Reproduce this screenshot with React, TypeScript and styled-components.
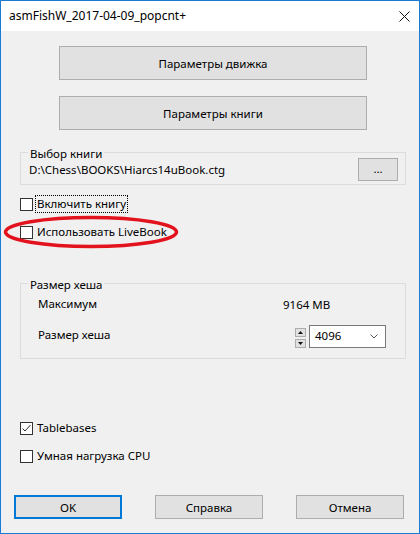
import { styled, createGlobalStyle } from 'styled-components'

const Global = createGlobalStyle`
html, body { margin: 0; padding: 0; background: #f0f0f0; }
* { box-sizing: border-box; }
`

const FONT = `"Noto Sans", "Liberation Sans", sans-serif`

const Check = ({ checked, focused, label }: { checked?: boolean; focused?: boolean; label: string }) => (
    <CheckRow>
        <Box>
            {checked && (
                <svg width="11" height="11" viewBox="0 0 11 11">
                    <polyline points="1.5,5.5 4,8 9.5,2" fill="none" stroke="#333" strokeWidth="1" />
                </svg>
            )}
        </Box>
        <CheckText $focused={focused}>{label}</CheckText>
    </CheckRow>
)

const App = () => {
    return (
        <>
            <Global />
            <Window>
                <TitleBar>
                    <Title>asmFishW_2017-04-09_popcnt+</Title>
                    <Close>
                        <svg width="11" height="11" viewBox="0 0 11 11">
                            <path d="M0.5 0.5 L10.5 10.5 M10.5 0.5 L0.5 10.5" stroke="#111" strokeWidth="1" />
                        </svg>
                    </Close>
                </TitleBar>
                <Body>
                    <BigButton $top={15}>Параметры движка</BigButton>
                    <BigButton $top={16}>Параметры книги</BigButton>

                    <Group $top={13}>
                        <Legend>Выбор книги</Legend>
                        <PathRow>
                            <span>D:\Chess\BOOKS\Hiarcs14uBook.ctg</span>
                            <SmallButton>...</SmallButton>
                        </PathRow>
                    </Group>

                    <Checks $top={10}>
                        <Check focused label="Включить книгу" />
                        <Marked>
                            <Check label="Использовать LiveBook" />
                            <Ellipse width="178" height="34" viewBox="0 0 178 34">
                                <ellipse cx="88" cy="17" rx="85.5" ry="14.5" fill="none" stroke="#e3131e" strokeWidth="3.5" />
                            </Ellipse>
                        </Marked>
                    </Checks>

                    <Group $top={33}>
                        <Legend>Размер хеша</Legend>
                        <HashRows>
                            <InfoRow>
                                <InfoLabel $w={245}>Максимум</InfoLabel>
                                <span>9164 MB</span>
                            </InfoRow>
                            <InfoRow>
                                <InfoLabel $w={257}>Размер хеша</InfoLabel>
                                <Spinner>
                                    <SpinBtn>
                                        <svg width="5" height="3" viewBox="0 0 5 3"><polygon points="2.5,0 5,3 0,3" fill="#111" /></svg>
                                    </SpinBtn>
                                    <SpinBtn>
                                        <svg width="5" height="3" viewBox="0 0 5 3"><polygon points="0,0 5,0 2.5,3" fill="#111" /></svg>
                                    </SpinBtn>
                                </Spinner>
                                <Combo>
                                    <span>4096</span>
                                    <svg width="8" height="5" viewBox="0 0 8 5">
                                        <polyline points="0.5,0.5 4,4 7.5,0.5" fill="none" stroke="#555" strokeWidth="1" />
                                    </svg>
                                </Combo>
                            </InfoRow>
                        </HashRows>
                    </Group>

                    <Checks $top={60}>
                        <Check checked label="Tablebases" />
                        <Check label="Умная нагрузка CPU" />
                    </Checks>

                    <Footer>
                        <DlgButton $primary>OK</DlgButton>
                        <DlgButton>Справка</DlgButton>
                        <DlgButton>Отмена</DlgButton>
                    </Footer>
                </Body>
            </Window>
        </>
    )
}

export default App

const Window = styled.div`
width: 420px;
height: 534px;
border: 1px solid #1b7bd4;
background: #f0f0f0;
font-family: ${FONT};
font-size: 11.5px;
color: #000;
display: flex;
flex-direction: column;
overflow: hidden;
`

const TitleBar = styled.div`
height: 30px;
background: #fff;
display: flex;
align-items: center;
justify-content: space-between;
padding: 0 9px 0 8px;
`

const Title = styled.div`
font-size: 12px;
line-height: 16px;
`

const Close = styled.div`
width: 11px;
height: 11px;
display: flex;
margin-top: 1px;
`

const Body = styled.div`
flex: 1;
display: flex;
flex-direction: column;
`

const BigButton = styled.div<{ $top: number }>`
margin: ${p => p.$top}px 0 0 58px;
width: 308px;
height: 34px;
background: #e1e1e1;
border: 1px solid #adadad;
display: flex;
align-items: center;
justify-content: center;
`

const Group = styled.fieldset<{ $top: number }>`
margin: ${p => p.$top}px 0 0 19px;
width: 386px;
padding: 0;
border: 1px solid #dcdcdc;
min-width: 0;
`

const Legend = styled.legend`
margin-left: 7px;
padding: 4px 2px 0;
line-height: 14px;
`

const PathRow = styled.div`
margin-top: -3px;
padding: 0 7px 3px 8px;
display: flex;
align-items: center;
justify-content: space-between;
line-height: 16px;

& > span { margin-top: 1px; }
`

const SmallButton = styled.div`
width: 40px;
height: 23px;
background: #e1e1e1;
border: 1px solid #adadad;
display: flex;
align-items: center;
justify-content: center;
padding-bottom: 2px;
`

const Checks = styled.div<{ $top: number }>`
margin: ${p => p.$top}px 0 0 19px;
display: flex;
flex-direction: column;
gap: 10px;
`

const CheckRow = styled.div`
height: 18px;
display: flex;
align-items: center;
gap: 2px;
`

const Box = styled.span`
width: 13px;
height: 13px;
border: 1px solid #333;
background: #fff;
display: flex;
align-items: center;
justify-content: center;
`

const CheckText = styled.span<{ $focused?: boolean }>`
height: 18px;
line-height: 16px;
padding: 0 1px;
border: 1px dotted ${p => (p.$focused ? '#000' : 'transparent')};
`

const Marked = styled.div`
position: relative;
`

const Ellipse = styled.svg`
position: absolute;
left: -17px;
top: -8px;
pointer-events: none;
`

const HashRows = styled.div`
padding: 5px 0 10px 17px;
display: flex;
flex-direction: column;
gap: 11px;
`

const InfoRow = styled.div`
display: flex;
align-items: center;
min-height: 16px;
line-height: 16px;
`

const InfoLabel = styled.span<{ $w: number }>`
width: ${p => p.$w}px;
margin-top: -2px;
`

const Spinner = styled.div`
width: 11px;
display: flex;
flex-direction: column;
gap: 2px;
margin: 4px 3px 0 0;
`

const SpinBtn = styled.div`
height: 9px;
background: #e1e1e1;
border: 1px solid #adadad;
display: flex;
align-items: center;
justify-content: center;
`

const Combo = styled.div`
width: 77px;
height: 23px;
background: #fff;
border: 1px solid #7a7a7a;
display: flex;
align-items: center;
justify-content: space-between;
padding: 0 7px 0 5px;
`

const Footer = styled.div`
margin: 30px 0 0 13px;
display: flex;
gap: 33px;
`

const DlgButton = styled.div<{ $primary?: boolean }>`
width: 108px;
height: 24px;
background: #e1e1e1;
border: ${p => (p.$primary ? '2px solid #0078d7' : '1px solid #adadad')};
display: flex;
align-items: center;
justify-content: center;
`
